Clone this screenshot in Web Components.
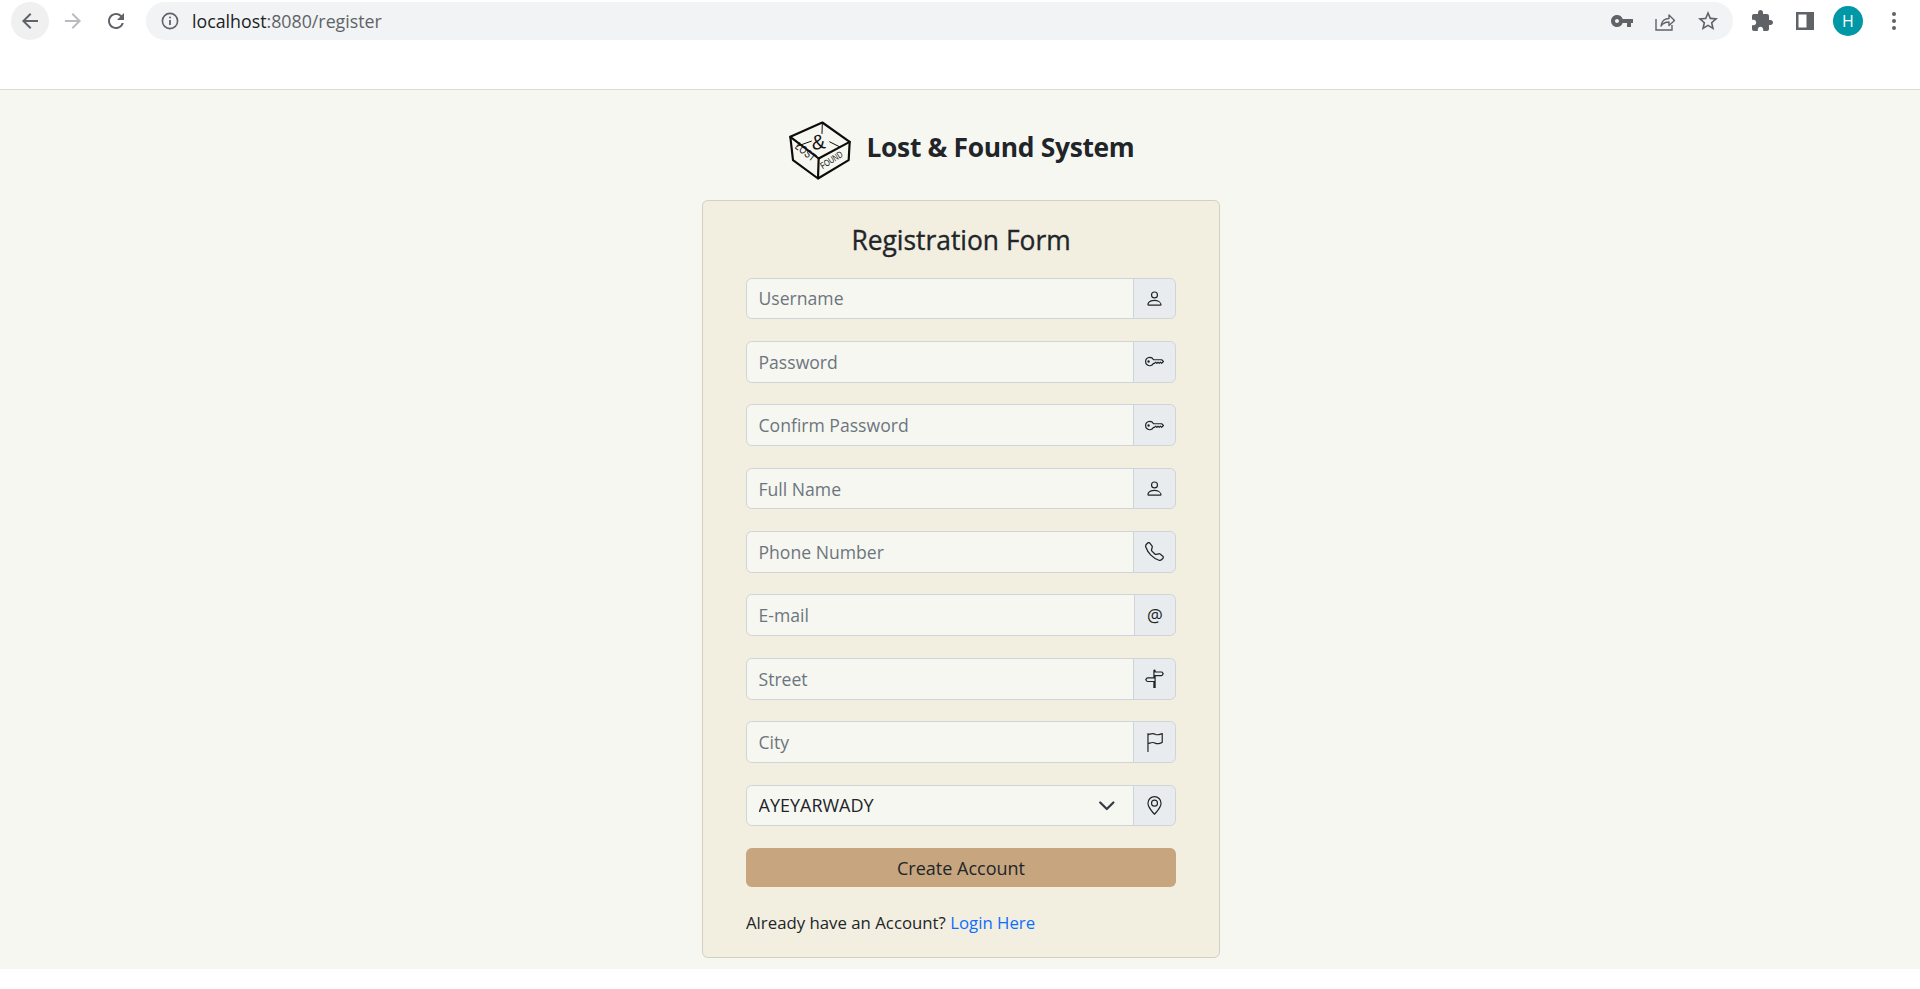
<!DOCTYPE html>
<html lang="en">
<head>
<meta charset="utf-8">
<title>Lost &amp; Found System</title>
<style>
  html, body { margin: 0; background: #fff; }
  body { font-family: "Open Sans", "Noto Sans", sans-serif; color: #212529; }
</style>
</head>
<body>
<lf-browser-bar url-host="localhost" url-path=":8080/register"></lf-browser-bar>
<lf-page>
  <lf-brand>Lost &amp; Found System</lf-brand>
  <lf-card heading="Registration Form">
    <lf-field placeholder="Username" icon="person"></lf-field>
    <lf-field placeholder="Password" icon="key" type="password"></lf-field>
    <lf-field placeholder="Confirm Password" icon="key" type="password"></lf-field>
    <lf-field placeholder="Full Name" icon="person"></lf-field>
    <lf-field placeholder="Phone Number" icon="telephone"></lf-field>
    <lf-field placeholder="E-mail" icon="at"></lf-field>
    <lf-field placeholder="Street" icon="signpost"></lf-field>
    <lf-field placeholder="City" icon="flag"></lf-field>
    <lf-select-field icon="geo">
      <option>AYEYARWADY</option>
      <option>BAGO</option>
      <option>MAGWAY</option>
      <option>MANDALAY</option>
      <option>SAGAING</option>
      <option>YANGON</option>
    </lf-select-field>
    <lf-submit>Create Account</lf-submit>
    <lf-hint>Already have an Account? <a href="#" slot="link">Login Here</a></lf-hint>
  </lf-card>
</lf-page>

<script>
// bootstrap icon paths, 16x16 box
const ICONS = {
  person: '<path d="M8 8a3 3 0 1 0 0-6 3 3 0 0 0 0 6Zm2-3a2 2 0 1 1-4 0 2 2 0 0 1 4 0Zm4 8c0 1-1 1-1 1H3s-1 0-1-1 1-4 6-4 6 4 6 4Zm-1-.004c-.001-.246-.154-.986-.832-1.664C11.516 10.68 10.289 10 8 10c-2.29 0-3.516.68-4.168 1.332-.678.678-.83 1.418-.832 1.664h10Z"/>',
  key: '<path d="M0 8a4 4 0 0 1 7.465-2H14a.5.5 0 0 1 .354.146l1.5 1.5a.5.5 0 0 1 0 .708l-1.5 1.5a.5.5 0 0 1-.708 0L13 9.207l-.646.647a.5.5 0 0 1-.708 0L11 9.207l-.646.647a.5.5 0 0 1-.708 0L9 9.207l-.646.647A.5.5 0 0 1 8 10h-.535A4 4 0 0 1 0 8zm4-3a3 3 0 1 0 2.712 4.285A.5.5 0 0 1 7.163 9h.63l.853-.854a.5.5 0 0 1 .708 0l.646.647.646-.647a.5.5 0 0 1 .708 0l.646.647.646-.647a.5.5 0 0 1 .708 0l.646.647.793-.793-1-1h-6.63a.5.5 0 0 1-.451-.285A3 3 0 0 0 4 5z"/><path d="M4 8a1 1 0 1 1-2 0 1 1 0 0 1 2 0z"/>',
  telephone: '<path d="M3.654 1.328a.678.678 0 0 0-1.015-.063L1.605 2.3c-.483.484-.661 1.169-.45 1.77a17.568 17.568 0 0 0 4.168 6.608 17.569 17.569 0 0 0 6.608 4.168c.601.211 1.286.033 1.77-.45l1.034-1.034a.678.678 0 0 0-.063-1.015l-2.307-1.794a.678.678 0 0 0-.58-.122l-2.19.547a1.745 1.745 0 0 1-1.657-.459L5.482 8.062a1.745 1.745 0 0 1-.46-1.657l.548-2.19a.678.678 0 0 0-.122-.58L3.654 1.328zM1.884.511a1.745 1.745 0 0 1 2.612.163L6.29 2.98c.329.423.445.974.315 1.494l-.547 2.19a.678.678 0 0 0 .178.643l2.457 2.457a.678.678 0 0 0 .644.178l2.189-.547a1.745 1.745 0 0 1 1.494.315l2.306 1.794c.829.645.905 1.87.163 2.611l-1.034 1.034c-.74.74-1.846 1.065-2.877.702a18.634 18.634 0 0 1-7.01-4.42 18.634 18.634 0 0 1-4.42-7.009c-.362-1.03-.037-2.137.703-2.877L1.885.511z"/>',
  signpost: '<path d="M7 7V1.414a1 1 0 0 1 2 0V2h5a1 1 0 0 1 .8.4l.975 1.3a.5.5 0 0 1 0 .6L14.8 5.6a1 1 0 0 1-.8.4H9v10H7v-5H2a1 1 0 0 1-.8-.4L.225 9.3a.5.5 0 0 1 0-.6L1.2 7.4A1 1 0 0 1 2 7h5zm1 3V8H2l-.75 1L2 10h6zm0-5h6l.75-1L14 3H8v2z"/>',
  flag: '<path d="M14.778.085A.5.5 0 0 1 15 .5V8a.5.5 0 0 1-.314.464L14.5 8l.186.464-.003.001-.006.003-.023.009a12.435 12.435 0 0 1-.397.15c-.264.095-.631.223-1.047.35-.816.252-1.879.523-2.71.523-.847 0-1.548-.28-2.158-.525l-.028-.01C7.68 8.71 7.14 8.5 6.5 8.5c-.7 0-1.638.23-2.437.477A19.626 19.626 0 0 0 3 9.342V15.5a.5.5 0 0 1-1 0V.5a.5.5 0 0 1 1 0v.282c.226-.079.496-.17.79-.26C4.606.272 5.67 0 6.5 0c.84 0 1.524.277 2.121.519l.043.018C9.286.788 9.828 1 10.5 1c.7 0 1.638-.23 2.437-.477a19.587 19.587 0 0 0 1.349-.476l.019-.007.004-.002h.001M14 1.221c-.22.078-.48.167-.766.255-.81.252-1.872.523-2.734.523-.886 0-1.592-.286-2.203-.534l-.008-.003C7.662 1.21 7.139 1 6.5 1c-.669 0-1.606.229-2.415.478A21.294 21.294 0 0 0 3 1.845v6.433c.22-.078.48-.167.766-.255C4.576 7.77 5.638 7.5 6.5 7.5c.847 0 1.548.28 2.158.525l.028.01C9.32 8.29 9.86 8.5 10.5 8.5c.668 0 1.606-.229 2.415-.478A21.317 21.317 0 0 0 14 7.655V1.222z"/>',
  geo: '<path d="M12.166 8.94c-.524 1.062-1.234 2.12-1.96 3.07A31.493 31.493 0 0 1 8 14.58a31.481 31.481 0 0 1-2.206-2.57c-.726-.95-1.436-2.008-1.96-3.07C3.304 7.867 3 6.862 3 6a5 5 0 0 1 10 0c0 .862-.305 1.867-.834 2.94zM8 16s6-5.686 6-10A6 6 0 0 0 2 6c0 4.314 6 10 6 10z"/><path d="M8 8a2 2 0 1 1 0-4 2 2 0 0 1 0 4zm0 1a3 3 0 1 0 0-6 3 3 0 0 0 0 6z"/>'
};

function addonIcon(name) {
  if (name === 'at') return '<span class="glyph">@</span>';
  return `<svg width="19" height="19" viewBox="0 0 16 16" fill="currentColor">${ICONS[name]}</svg>`;
}

const GROUP_CSS = `
  :host { display: flex; height: 41.8px; font-size: 17.6px; line-height: 26.4px; }
  .control {
    flex: 1; min-width: 0; box-sizing: border-box; margin: 0; height: 100%;
    padding: 0 11.5px; font: inherit; color: #212529; background: #f7f7f2;
    border: 1px solid #ced4da; border-radius: 5.8px 0 0 5.8px; outline: none;
  }
  .control::placeholder { color: #6c757d; opacity: 1; }
  .addon {
    flex: none; width: 43px; box-sizing: border-box; margin-left: -1px;
    display: flex; align-items: center; justify-content: center;
    color: #212529; background: #e9ecef; border: 1px solid #ced4da;
    border-radius: 0 5.8px 5.8px 0;
  }
  .addon.narrow { width: 42px; }
  .glyph { font-size: 17.6px; line-height: 1; }
`;

class LfField extends HTMLElement {
  constructor() {
    super();
    this.attachShadow({ mode: 'open' });
  }
  connectedCallback() {
    const icon = this.getAttribute('icon');
    this.shadowRoot.innerHTML = `
      <style>${GROUP_CSS}</style>
      <input class="control" type="${this.getAttribute('type') || 'text'}" placeholder="${this.getAttribute('placeholder') || ''}">
      <span class="addon ${icon === 'at' ? 'narrow' : ''}">${addonIcon(icon)}</span>
    `;
  }
}

class LfSelectField extends HTMLElement {
  constructor() {
    super();
    this.attachShadow({ mode: 'open' });
  }
  connectedCallback() {
    this.shadowRoot.innerHTML = `
      <style>${GROUP_CSS}
        .wrap { flex: 1; min-width: 0; position: relative; display: flex; }
        select.control { appearance: none; -webkit-appearance: none; width: 100%; font-size: 18px; }
        .chev { position: absolute; right: 18px; top: 12px; pointer-events: none; }
      </style>
      <div class="wrap">
        <select class="control">${this.innerHTML}</select>
        <svg class="chev" width="17.6" height="17.6" viewBox="0 0 16 16" fill="none" stroke="#343a40" stroke-width="2" stroke-linecap="round" stroke-linejoin="round"><path d="m2 5 6 6 6-6"/></svg>
      </div>
      <span class="addon">${addonIcon(this.getAttribute('icon'))}</span>
    `;
  }
}

class LfSubmit extends HTMLElement {
  constructor() {
    super();
    this.attachShadow({ mode: 'open' });
    this.shadowRoot.innerHTML = `
      <style>
        :host { display: block; }
        button {
          display: block; width: 100%; height: 39px; margin: 0; padding: 0;
          font: inherit; font-size: 18px; color: #212529; background: #c6a57f;
          border: 0; border-radius: 5.8px; cursor: pointer;
        }
      </style>
      <button type="button"><slot></slot></button>
    `;
  }
}

class LfHint extends HTMLElement {
  constructor() {
    super();
    this.attachShadow({ mode: 'open' });
    this.shadowRoot.innerHTML = `
      <style>
        :host { display: block; font-size: 16.8px; line-height: 26px; margin-top: 1.5px; }
        ::slotted(a) { color: #0d6efd; text-decoration: none; }
      </style>
      <slot></slot><slot name="link"></slot>
    `;
  }
}

class LfCard extends HTMLElement {
  constructor() {
    super();
    this.attachShadow({ mode: 'open' });
  }
  connectedCallback() {
    this.shadowRoot.innerHTML = `
      <style>
        :host {
          display: block; box-sizing: border-box; width: 518px; height: 758px;
          padding: 22px 43px 0; background: #f2eee0;
          border: 1px solid #d3d0c3; border-radius: 5.8px;
        }
        h2 { margin: 0 0 20.5px; text-align: center; font-size: 26.4px; line-height: 34px; font-weight: 400; -webkit-text-stroke: 0.35px #212529; color: #212529; }
        .rows { display: flex; flex-direction: column; gap: 21.6px; }
      </style>
      <h2>${this.getAttribute('heading')}</h2>
      <div class="rows"><slot></slot></div>
    `;
  }
}

class LfBrand extends HTMLElement {
  constructor() {
    super();
    this.attachShadow({ mode: 'open' });
    this.shadowRoot.innerHTML = `
      <style>
        :host { display: flex; align-items: center; justify-content: center; gap: 14px; height: 62px; margin-bottom: 18px; }
        svg { display: block; overflow: visible; }
        span { font-size: 26.4px; font-weight: 700; letter-spacing: -0.32px; padding-bottom: 9px; color: #212529; }
        text { font-family: "Liberation Sans", sans-serif; fill: #111; stroke: none; }
      </style>
      <svg width="65" height="62" viewBox="80 45 195 185" fill="none" stroke="#0c0c0c" stroke-width="6.5" stroke-linejoin="round" stroke-linecap="round">
        <path d="M87 95 183 52 265 110 172 160Z"/>
        <path d="M87 95 95 165 170 220 172 160M170 220 262 165 265 110"/>
        <path stroke-width="3" d="M183 52 182 85M150 108 108 123M205 110 235 125"/>
        <text x="150" y="132" font-size="62" transform="rotate(-8 170 110)">&amp;</text>
        <text font-size="34" transform="translate(99 128) rotate(38)" textLength="68" lengthAdjust="spacingAndGlyphs">LOST</text>
        <text font-size="28" transform="translate(184 192) rotate(-32)" textLength="74" lengthAdjust="spacingAndGlyphs">FOUND</text>
      </svg>
      <span><slot></slot></span>
    `;
  }
}

class LfPage extends HTMLElement {
  constructor() {
    super();
    this.attachShadow({ mode: 'open' });
    this.shadowRoot.innerHTML = `
      <style>
        :host {
          display: flex; flex-direction: column; align-items: center; box-sizing: border-box;
          height: 880px; padding: 30px 0 0 2px; background: #f7f7f2; border-top: 1px solid #dedccf;
        }
      </style>
      <slot></slot>
    `;
  }
}

class LfBrowserBar extends HTMLElement {
  constructor() {
    super();
    this.attachShadow({ mode: 'open' });
  }
  connectedCallback() {
    const grey = '#5f6368';
    this.shadowRoot.innerHTML = `
      <style>
        :host { display: flex; align-items: flex-start; box-sizing: border-box; height: 89px; padding: 2px 0 0 11px; background: #fff; }
        .btn { flex: none; width: 38px; height: 38px; display: flex; align-items: center; justify-content: center; border-radius: 50%; }
        .btn + .btn { margin-left: 5px; }
        .btn.on { background: #f0f0f1; }
        .omni {
          flex: none; width: 1587px; height: 38px; margin-left: 11px; box-sizing: border-box;
          display: flex; align-items: center; padding: 0 13px 0 15px;
          background: #f1f3f4; border-radius: 19px; font-size: 17.8px; color: #5f6368;
        }
        .url { margin-left: 13px; flex: 1; white-space: nowrap; }
        .url b { font-weight: 400; color: #202124; }
        .omni-ico { flex: none; width: 24px; height: 24px; margin-left: 19px; display: flex; align-items: center; justify-content: center; }
        .tools { display: flex; align-items: center; height: 38px; }
        .tools svg { display: block; }
        .tool { width: 24px; height: 24px; margin-left: 19px; display: flex; align-items: center; justify-content: center; }
        .tool:first-child { margin-left: 17px; }
        .avatar {
          width: 30px; height: 30px; margin-left: 16px; border-radius: 50%; background: #0097a7; color: #fff;
          display: flex; align-items: center; justify-content: center; font-size: 16px;
        }
      </style>
      <div class="btn on"><svg width="24" height="24" viewBox="0 0 24 24" fill="${grey}"><path d="M20 11H7.83l5.59-5.59L12 4l-8 8 8 8 1.41-1.41L7.83 13H20v-2z"/></svg></div>
      <div class="btn"><svg width="24" height="24" viewBox="0 0 24 24" fill="#b9bbbe"><path d="M4 11h12.17l-5.59-5.59L12 4l8 8-8 8-1.41-1.41L16.17 13H4v-2z"/></svg></div>
      <div class="btn"><svg width="24" height="24" viewBox="0 0 24 24" fill="${grey}"><path d="M17.65 6.35A7.958 7.958 0 0 0 12 4c-4.42 0-7.99 3.58-7.99 8s3.57 8 7.99 8c3.73 0 6.84-2.55 7.73-6h-2.08A5.99 5.99 0 0 1 12 18c-3.31 0-6-2.69-6-6s2.69-6 6-6c1.66 0 3.14.69 4.22 1.78L13 11h7V4l-2.35 2.35z"/></svg></div>
      <div class="omni">
        <svg width="18" height="18" viewBox="0 0 18 18" fill="none" stroke="${grey}" stroke-width="1.6"><circle cx="9" cy="9" r="7.6"/><path d="M9 8v5" stroke-width="1.8"/><circle cx="9" cy="5.4" r="1" fill="${grey}" stroke="none"/></svg>
        <span class="url"><b>${this.getAttribute('url-host')}</b>${this.getAttribute('url-path')}</span>
        <span class="omni-ico"><svg width="24" height="24" viewBox="0 0 24 24" fill="${grey}"><path d="M12.65 10A5.99 5.99 0 0 0 7 6c-3.31 0-6 2.69-6 6s2.69 6 6 6a5.99 5.99 0 0 0 5.65-4H17v4h4v-4h2v-4H12.65zM7 14c-1.1 0-2-.9-2-2s.9-2 2-2 2 .9 2 2-.9 2-2 2z"/></svg></span>
        <span class="omni-ico"><svg width="22" height="22" viewBox="0 0 22 22" fill="none" stroke="${grey}" stroke-width="1.4"><path d="M2 9v11h16v-5"/><path d="M7 16c.5-5 4-7.5 8-7.5V5l5.5 5.5-5.5 5V12c-3.5 0-6 1-8 4Z" stroke-linejoin="round"/></svg></span>
        <span class="omni-ico"><svg width="24" height="24" viewBox="0 0 24 24" fill="${grey}"><path d="M22 9.24l-7.19-.62L12 2 9.19 8.63 2 9.24l5.46 4.73L5.82 21 12 17.27 18.18 21l-1.63-7.03L22 9.24zM12 15.4l-3.76 2.27 1-4.28-3.32-2.88 4.38-.38L12 6.1l1.71 4.04 4.38.38-3.32 2.88 1 4.28L12 15.4z"/></svg></span>
      </div>
      <div class="tools">
        <span class="tool"><svg width="24" height="24" viewBox="0 0 24 24" fill="${grey}"><path d="M20.5 11H19V7c0-1.1-.9-2-2-2h-4V3.5C13 2.12 11.88 1 10.5 1S8 2.12 8 3.5V5H4c-1.1 0-1.99.9-1.99 2v3.8H3.5c1.49 0 2.7 1.21 2.7 2.7s-1.21 2.7-2.7 2.7H2V20c0 1.1.9 2 2 2h3.8v-1.5c0-1.49 1.21-2.7 2.7-2.7 1.49 0 2.7 1.21 2.7 2.7V22H17c1.1 0 2-.9 2-2v-4h1.5c1.38 0 2.5-1.12 2.5-2.5S21.88 11 20.5 11z"/></svg></span>
        <span class="tool"><svg width="20" height="20" viewBox="0 0 20 20" fill="${grey}"><path fill-rule="evenodd" d="M1 1h18v18H1zM3.5 3.5v13h8v-13z"/></svg></span>
        <span class="avatar">H</span>
        <span class="tool"><svg width="24" height="24" viewBox="0 0 24 24" fill="${grey}"><circle cx="12" cy="5" r="2"/><circle cx="12" cy="12" r="2"/><circle cx="12" cy="19" r="2"/></svg></span>
      </div>
    `;
  }
}

customElements.define('lf-field', LfField);
customElements.define('lf-select-field', LfSelectField);
customElements.define('lf-submit', LfSubmit);
customElements.define('lf-hint', LfHint);
customElements.define('lf-card', LfCard);
customElements.define('lf-brand', LfBrand);
customElements.define('lf-page', LfPage);
customElements.define('lf-browser-bar', LfBrowserBar);
</script>
</body>
</html>
